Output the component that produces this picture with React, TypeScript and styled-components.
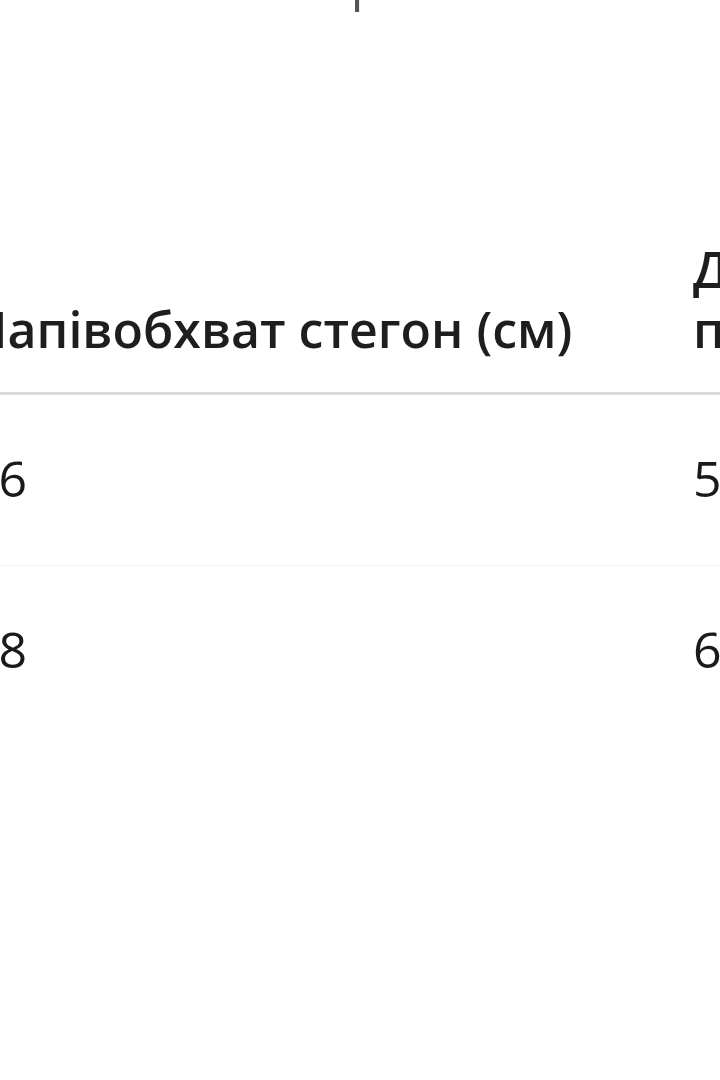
import { FC } from 'react';
import styled, { createGlobalStyle } from 'styled-components';

const GlobalStyle = createGlobalStyle`
    html, body {
        margin: 0;
        padding: 0;
        background: #fff;
        overflow: hidden;
    }
    body {
        font-family: "Open Sans", "Noto Sans", sans-serif;
        color: #222;
    }
`

const Page = styled.div`
    width: 720px;
    height: 1080px;
    overflow: hidden;
`
const Title = styled.h2`
    margin: -49px 0 0 0;
    height: 285px;
    font-size: 50px;
    line-height: 60px;
    font-weight: 400;
    color: #555;
    text-align: center;
    padding-left: 12px;
`
const Table = styled.table`
    margin-left: -30px;
    border-collapse: collapse;
    table-layout: fixed;
    width: 1300px;
    font-size: 50px;
    line-height: 60px;
`
const Col = styled.col<{width: number}>`
    width: ${props => props.width}px;
`
const HeadCell = styled.th`
    text-align: left;
    vertical-align: bottom;
    font-weight: 600;
    color: #1e1e1e;
    padding: 3px 0 33px 0;
    border-bottom: 3px solid #dcdcdc;
`
const HeadLine = styled.span`
    display: block;
    white-space: nowrap;
`
const Row = styled.tr`
    & + & td {
        border-top: 1px solid #f3f3f3;
    }
`
const Cell = styled.td`
    padding: 53px 0 57px 0;
    font-weight: 400;
    color: #1a1a1a;
    white-space: nowrap;
`

const rows = [
    {hips: '56', length: '58'},
    {hips: '58', length: '60'},
]

const App: FC = () => {
    return (
        <Page>
            <GlobalStyle/>
            <Title>р</Title>
            <Table>
                <colgroup>
                    <Col width={723}/>
                    <Col width={577}/>
                </colgroup>
                <thead>
                    <tr>
                        <HeadCell><HeadLine>Напівобхват стегон (см)</HeadLine></HeadCell>
                        <HeadCell>
                            <HeadLine>Довжина</HeadLine>
                            <HeadLine>по боковому шву (см)</HeadLine>
                        </HeadCell>
                    </tr>
                </thead>
                <tbody>
                    {rows.map((row) => (
                        <Row key={row.hips}>
                            <Cell>{row.hips}</Cell>
                            <Cell>{row.length}</Cell>
                        </Row>
                    ))}
                </tbody>
            </Table>
        </Page>
    )
}

export default App;
